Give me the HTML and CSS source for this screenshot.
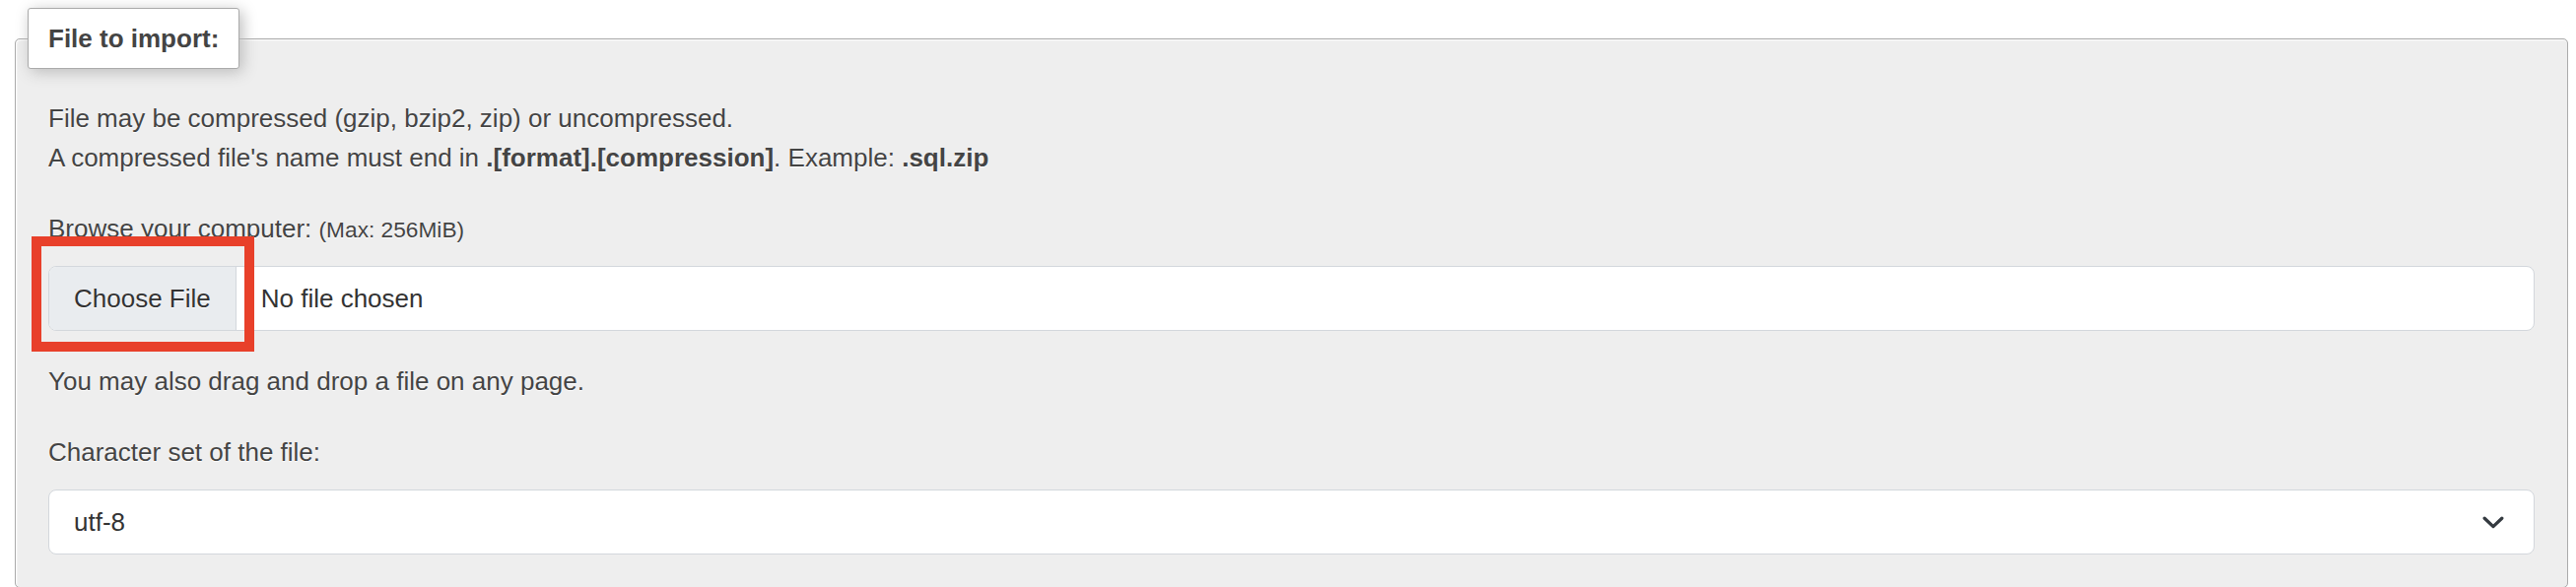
FILE: index.html
```html
<!DOCTYPE html>
<html lang="en">
<head>
<meta charset="utf-8">
<title>Import</title>
<link rel="stylesheet" href="styles.css">
</head>
<body>
<fieldset class="options">
  <legend class="legend">File to import:</legend>
  <div class="body">
    <p class="para">File may be compressed (gzip, bzip2, zip) or uncompressed.<br>A compressed file's name must end in <b>.[format].[compression]</b>. Example: <b>.sql.zip</b></p>
    <div class="label-row"><span>Browse your computer:</span> <small class="small">(Max: 256MiB)</small></div>
    <div class="file-wrap">
      <div class="file-input">
        <span class="file-btn">Choose File</span>
        <span class="file-name">No file chosen</span>
      </div>
      <div class="highlight"></div>
    </div>
    <p class="para">You may also drag and drop a file on any page.</p>
    <div class="label-row">Character set of the file:</div>
    <div class="select">
      <span class="select-value">utf-8</span>
      <svg class="chevron" width="22" height="13" viewBox="0 0 22 13" aria-hidden="true"><path d="M2.2 2.2 L11 10.6 L19.8 2.2" fill="none" stroke="#343a40" stroke-width="3.3" stroke-linecap="round" stroke-linejoin="round"/></svg>
    </div>
  </div>
</fieldset>
</body>
</html>
```
FILE: styles.css
```css
html, body {
  margin: 0;
  background: #fff;
}
body {
  padding: 8px 8px 0 15px;
  font-family: "Liberation Sans", Arial, Helvetica, sans-serif;
  font-size: 26px;
  color: #444;
}
.options {
  margin: 0;
  padding: 0 12px 33px 12px;
  border: 1px solid #aaa;
  border-radius: 5px;
  background: #eee;
  box-shadow: 1px 1px 2px #fff inset;
  text-shadow: 0 1px 1px #fff;
  min-width: 0;
}
.legend {
  padding: 10px 20px;
  border: 1px solid #aaa;
  border-radius: 3px;
  background: #fff;
  box-shadow: 3px 3px 15px #bbb;
  font-weight: bold;
  font-size: 26px;
  line-height: 40px;
  color: #444;
  text-shadow: none;
}
.body {
  padding: 30px 21px 0 21px;
}
.para {
  margin: 0 0 32px 0;
  line-height: 40px;
}
.para b {
  font-weight: bold;
}
.label-row {
  line-height: 40px;
  margin-bottom: 17px;
}
.label-row + .select {
  margin-top: 18px;
}
.small {
  font-size: 22.7px;
}
.file-wrap {
  position: relative;
  margin-bottom: 31px;
}
.file-input {
  display: flex;
  align-items: stretch;
  height: 66px;
  box-sizing: border-box;
  border: 1px solid #d3d7dc;
  border-radius: 8px;
  background: #fff;
  overflow: hidden;
  color: #333;
}
.file-btn {
  display: flex;
  align-items: center;
  padding: 0 25px;
  background: #e9ecef;
  border-right: 1px solid #d3d7dc;
}
.file-name {
  display: flex;
  align-items: center;
  padding-left: 25px;
}
.highlight {
  position: absolute;
  left: -17px;
  top: -30px;
  width: 226px;
  height: 117px;
  box-sizing: border-box;
  border: 10px solid #e8402a;
}
.select {
  display: flex;
  align-items: center;
  justify-content: space-between;
  height: 66px;
  box-sizing: border-box;
  padding: 0 30px 0 25px;
  border: 1px solid #d3d7dc;
  border-radius: 8px;
  background: #fff;
  color: #333;
}
.chevron {
  display: block;
}
```
